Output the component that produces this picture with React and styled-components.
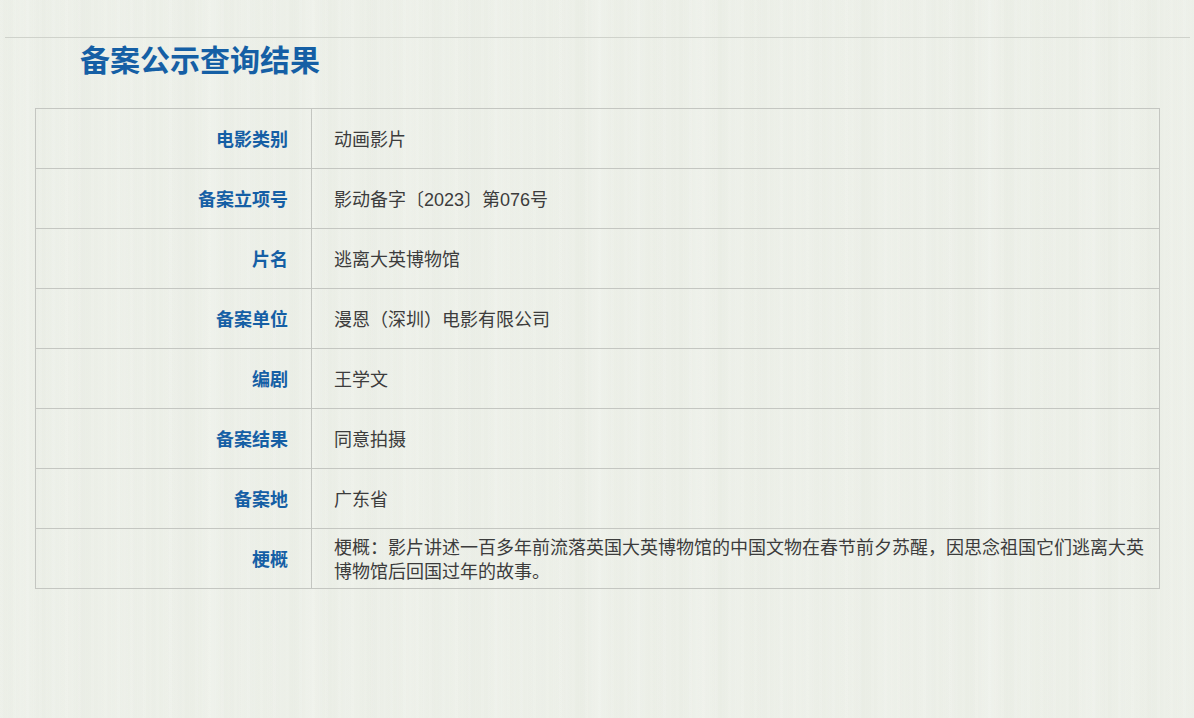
import styled, { createGlobalStyle } from "styled-components";

const GlobalStyle = createGlobalStyle`
  html, body {
    margin: 0;
    padding: 0;
  }
  body {
    min-height: 718px;
    background-color: #edf0e9;
    background-image:
      repeating-linear-gradient(90deg, rgba(255,255,255,0) 0, rgba(255,255,255,.14) 19px, rgba(255,255,255,0) 41px, rgba(255,255,255,.08) 53px, rgba(255,255,255,0) 97px),
      repeating-linear-gradient(90deg, rgba(190,200,175,0) 0, rgba(190,200,175,.05) 11px, rgba(190,200,175,0) 29px, rgba(190,200,175,.04) 43px, rgba(190,200,175,0) 71px),
      repeating-linear-gradient(90deg, rgba(255,255,255,.04) 0 3px, rgba(190,200,175,.02) 3px 7px, rgba(255,255,255,.02) 7px 8px, rgba(190,200,175,.015) 8px 13px);
    font-family: "Liberation Sans", "Noto Sans CJK SC", sans-serif;
  }
`;

const Page = styled.div`
  padding: 37px 4px 0 5px;
`;

const Header = styled.div`
  border-top: 1px solid #cfd2cb;
  padding: 0 0 0 75px;
`;

const Title = styled.h1`
  margin: 0;
  font-size: 30px;
  line-height: 46px;
  font-weight: bold;
  color: #155fa5;
`;

const InfoTable = styled.table`
  width: 1125px;
  margin: 24px 0 0 30px;
  border-collapse: collapse;
  table-layout: fixed;
`;

const Row = styled.tr`
  height: 60px;
`;

const Label = styled.th`
  width: 276px;
  box-sizing: border-box;
  padding: 2px 23px 0 0;
  border: 1px solid #c4c6c1;
  text-align: right;
  font-size: 18px;
  line-height: 24px;
  font-weight: bold;
  color: #155fa5;
`;

const Value = styled.td`
  padding: 2px 13px 0 22px;
  border: 1px solid #c4c6c1;
  text-align: left;
  font-size: 18px;
  line-height: 24px;
  color: #3c3c3c;
`;

const rows = [
  ["电影类别", "动画影片"],
  ["备案立项号", "影动备字〔2023〕第076号"],
  ["片名", "逃离大英博物馆"],
  ["备案单位", "漫恩（深圳）电影有限公司"],
  ["编剧", "王学文"],
  ["备案结果", "同意拍摄"],
  ["备案地", "广东省"],
  ["梗概", "梗概：影片讲述一百多年前流落英国大英博物馆的中国文物在春节前夕苏醒，因思念祖国它们逃离大英博物馆后回国过年的故事。"],
];

export default function App() {
  return (
    <Page>
      <GlobalStyle />
      <Header>
        <Title>备案公示查询结果</Title>
      </Header>
      <InfoTable>
        <tbody>
          {rows.map(([label, value]) => (
            <Row key={label}>
              <Label>{label}</Label>
              <Value>{value}</Value>
            </Row>
          ))}
        </tbody>
      </InfoTable>
    </Page>
  );
}
